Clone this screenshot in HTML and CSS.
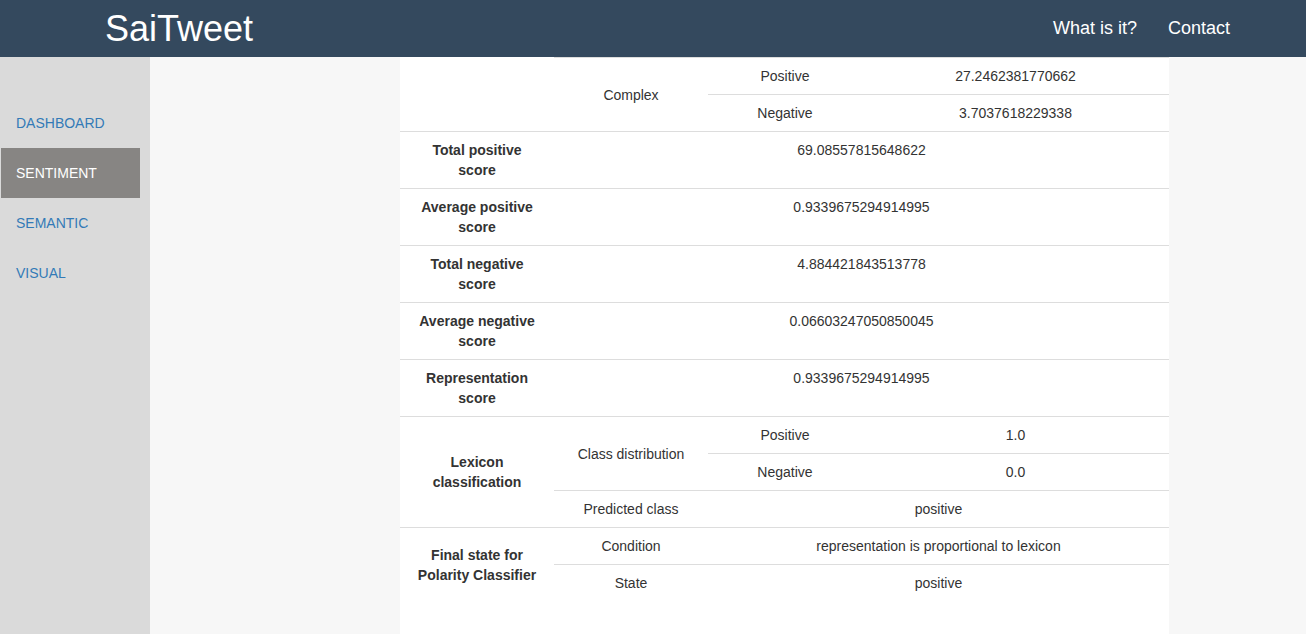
FILE: index.html
```html
<!DOCTYPE html>
<html lang="en">
<head>
<meta charset="utf-8">
<title>SaiTweet</title>
<link rel="stylesheet" href="styles.css">
</head>
<body>
<header class="topbar">
  <a class="brand" href="#">SaiTweet</a>
  <nav class="topnav">
    <a href="#">What is it?</a>
    <a href="#">Contact</a>
  </nav>
</header>
<div class="layout">
  <aside class="sidebar">
    <ul class="sidemenu">
      <li><a href="#">DASHBOARD</a></li>
      <li class="active"><a href="#">SENTIMENT</a></li>
      <li><a href="#">SEMANTIC</a></li>
      <li><a href="#">VISUAL</a></li>
    </ul>
  </aside>
  <main class="content">
    <section class="panel">
      <table class="results">
        <colgroup>
          <col class="c1"><col class="c2"><col class="c3"><col class="c4">
        </colgroup>
        <tbody>
          <tr>
            <th rowspan="2" class="cont"></th>
            <td rowspan="2" class="mid">Complex</td>
            <td>Positive</td>
            <td>27.2462381770662</td>
          </tr>
          <tr>
            <td>Negative</td>
            <td>3.7037618229338</td>
          </tr>
          <tr>
            <th>Total positive score</th>
            <td colspan="3">69.08557815648622</td>
          </tr>
          <tr>
            <th>Average positive score</th>
            <td colspan="3">0.9339675294914995</td>
          </tr>
          <tr>
            <th>Total negative score</th>
            <td colspan="3">4.884421843513778</td>
          </tr>
          <tr>
            <th>Average negative score</th>
            <td colspan="3">0.06603247050850045</td>
          </tr>
          <tr>
            <th>Representation score</th>
            <td colspan="3">0.9339675294914995</td>
          </tr>
          <tr>
            <th rowspan="3" class="mid">Lexicon classification</th>
            <td rowspan="2" class="mid">Class distribution</td>
            <td>Positive</td>
            <td>1.0</td>
          </tr>
          <tr>
            <td>Negative</td>
            <td>0.0</td>
          </tr>
          <tr>
            <td>Predicted class</td>
            <td colspan="2">positive</td>
          </tr>
          <tr>
            <th rowspan="2" class="mid">Final state for Polarity Classifier</th>
            <td>Condition</td>
            <td colspan="2">representation is proportional to lexicon</td>
          </tr>
          <tr>
            <td>State</td>
            <td colspan="2">positive</td>
          </tr>
        </tbody>
      </table>
    </section>
  </main>
</div>
</body>
</html>
```
FILE: styles.css
```css
html, body {
  margin: 0;
  padding: 0;
  height: 100%;
}
body {
  font-family: "Liberation Sans", Arial, Helvetica, sans-serif;
  font-size: 14px;
  line-height: 20px;
  color: #333;
  background: #f7f7f7;
  display: flex;
  flex-direction: column;
  overflow: hidden;
}
a {
  text-decoration: none;
}

/* Top bar */
.topbar {
  flex: 0 0 57px;
  height: 57px;
  background: #34495e;
  display: flex;
  align-items: center;
  justify-content: space-between;
  padding: 0 76px 0 105px;
}
.brand {
  color: #fff;
  font-size: 36px;
  line-height: 57px;
}
.topnav {
  display: flex;
  gap: 31px;
}
.topnav a {
  color: #fff;
  font-size: 18px;
  line-height: 57px;
}

/* Body layout */
.layout {
  flex: 1;
  display: flex;
  min-height: 0;
}
.sidebar {
  flex: 0 0 150px;
  background: #dadada;
}
.sidemenu {
  list-style: none;
  margin: 41px 0 0 1px;
  padding: 0;
  width: 139px;
}
.sidemenu li a {
  display: block;
  padding: 15px 15px;
  line-height: 20px;
  color: #337ab7;
}
.sidemenu li.active a {
  background: #878583;
  color: #fff;
}

.content {
  flex: 1;
  display: flex;
  background: #f7f7f7;
}
.panel {
  width: 769px;
  margin-left: 250px;
  background: #fff;
}

/* Results table */
.results {
  width: 769px;
  table-layout: fixed;
  border-collapse: separate;
  border-spacing: 0;
}
.results col.c1 { width: 154px; }
.results col.c2 { width: 154px; }
.results col.c3 { width: 154px; }
.results col.c4 { width: 307px; }
.results th,
.results td {
  padding: 8px;
  border-top: 1px solid #ddd;
  text-align: center;
  vertical-align: top;
  line-height: 20px;
}
.results th {
  font-weight: bold;
  padding-left: 13px;
  padding-right: 13px;
}
.results .mid {
  vertical-align: middle;
}
.results th.cont {
  border-top: none;
}
```
